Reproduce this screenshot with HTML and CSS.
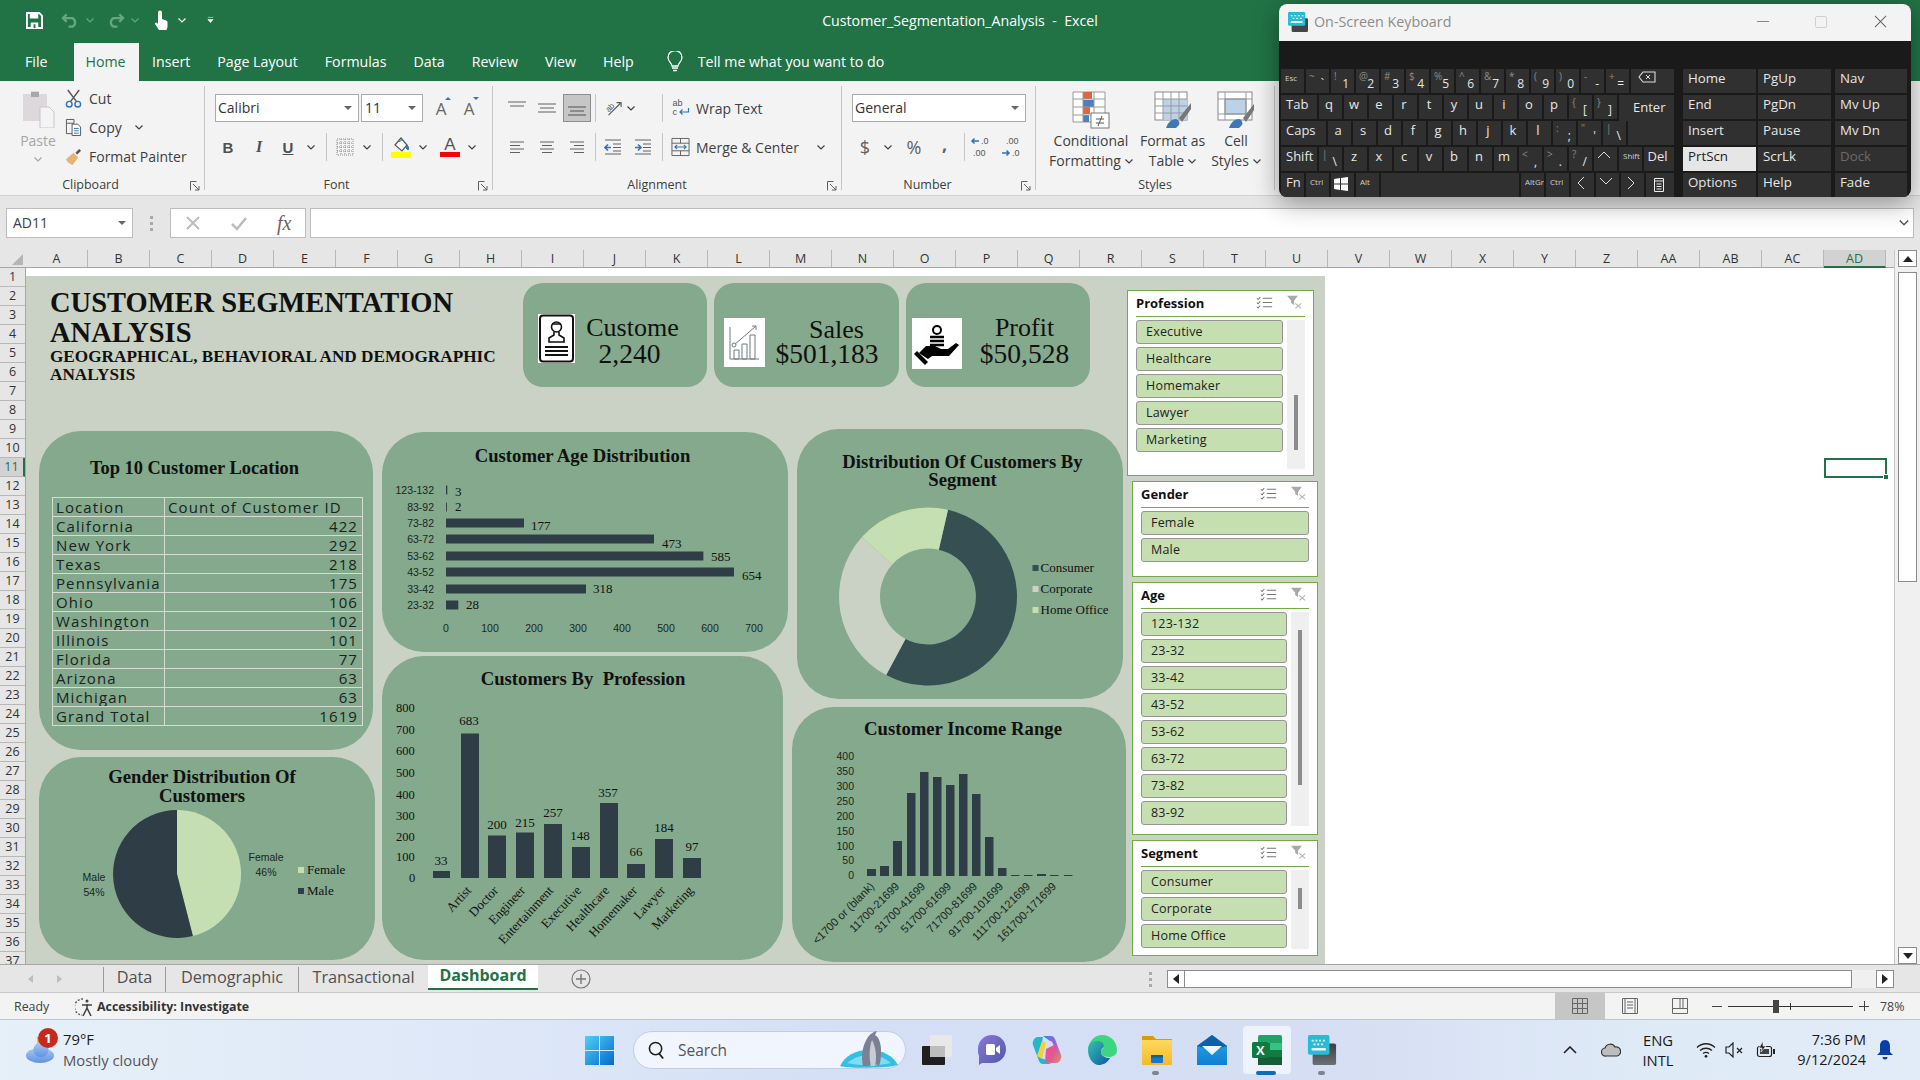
FILE: index.html
```html
<!DOCTYPE html>
<html lang="en">
<head>
  <meta charset="UTF-8">
  <meta name="viewport" content="width=device-width, initial-scale=1.0">
  <title>Customer_Segmentation_Analysis - Excel</title>
  <link rel="stylesheet" href="styles.css">
</head>
<body>
  <!-- shared icon parts -->
  <svg class="sprite" width="0" height="0">
    <defs>
      <linearGradient id="g-start" x1="0" y1="0" x2="1" y2="1"><stop offset="0" stop-color="#4fd0f8"/><stop offset="1" stop-color="#0569c9"/></linearGradient>
      <linearGradient id="g-keys" x1="0" y1="0" x2="0" y2="1"><stop offset="0" stop-color="#3a3f44"/><stop offset="1" stop-color="#6b7074"/></linearGradient>
      <linearGradient id="g-chat" x1="0" y1="0" x2="1" y2="1"><stop offset="0" stop-color="#8a77d8"/><stop offset="1" stop-color="#4f58a8"/></linearGradient>
      <linearGradient id="g-edge" x1="0" y1="0" x2="1" y2="1"><stop offset="0" stop-color="#35c1b0"/><stop offset="1" stop-color="#0c59a4"/></linearGradient>
      <linearGradient id="g-folder" x1="0" y1="0" x2="0" y2="1"><stop offset="0" stop-color="#ffd95c"/><stop offset="1" stop-color="#f5b92a"/></linearGradient>
      <linearGradient id="g-mail" x1="0" y1="0" x2="0" y2="1"><stop offset="0" stop-color="#2aa7e8"/><stop offset="1" stop-color="#0f7fd3"/></linearGradient>
      <linearGradient id="g-cloud" x1="0" y1="0" x2="0" y2="1"><stop offset="0" stop-color="#a9c9f5"/><stop offset="1" stop-color="#5f93df"/></linearGradient>
      <linearGradient id="g-copilot" x1="0" y1="0" x2="1" y2="1"><stop offset="0" stop-color="#2c8fe8"/><stop offset=".5" stop-color="#b05ad0"/><stop offset="1" stop-color="#f4884a"/></linearGradient>
      <symbol id="chev" viewBox="0 0 8 5"><path d="M.5.5 4 4 7.5.5" fill="none" stroke="currentColor" stroke-width="1.2"/></symbol>
      <symbol id="launch" viewBox="0 0 10 10"><path d="M.5 9.5V.5h6M3 3l6 6M9 5v4H5" fill="none" stroke="#606060"/></symbol>
      <symbol id="al-top" viewBox="0 0 20 16"><path d="M1 2h18M3 6h14" stroke="#606060" fill="none"/></symbol>
      <symbol id="al-mid" viewBox="0 0 20 16"><path d="M1 4h18M3 8h14M1 12h18" stroke="#606060" fill="none"/></symbol>
      <symbol id="al-bot" viewBox="0 0 20 16"><path d="M1 7h18M3 11h14M1 15h18" stroke="#505050" fill="none"/></symbol>
      <symbol id="al-left" viewBox="0 0 16 14"><path d="M1 2h14M1 5.5h10M1 9h14M1 12.5h10" stroke="#606060" fill="none"/></symbol>
      <symbol id="al-center" viewBox="0 0 16 14"><path d="M1 2h14M3 5.5h10M1 9h14M3 12.5h10" stroke="#606060" fill="none"/></symbol>
      <symbol id="al-right" viewBox="0 0 16 14"><path d="M1 2h14M5 5.5h10M1 9h14M5 12.5h10" stroke="#606060" fill="none"/></symbol>
      <symbol id="grid-list" viewBox="0 0 20 16"><path d="M1 3l1.5 1.5L5 1.5M1 8l1.5 1.5L5 6.5M1 13l1.5 1.5L5 11.5" fill="none" stroke="#777" stroke-width="1.2"/><path d="M8 3h11M8 8h11M8 13h11" stroke="#777" stroke-width="1.2"/></symbol>
      <symbol id="clear-filter" viewBox="0 0 20 18"><path d="M1 1h13L9.5 7v5L6 9.5V7z" fill="#a9a9a9"/><path d="M11 10l7 6M18 10l-7 6" stroke="#b5b5b5" stroke-width="1.4"/></symbol>
    </defs>
  </svg>

  <div class="window">
    <!-- title bar -->
    <header class="titlebar">
      <div class="qat">
        <svg class="qat-save" viewBox="0 0 18 18"><path d="M1 1h13l3 3v13H1z" fill="none" stroke="#fff" stroke-width="2"/><path d="M4 1h9v6H4zM5 11h8v6H5z" fill="#fff"/><rect x="8" y="13" width="2" height="4" fill="#217346"/></svg>
        <svg class="qat-arrow" viewBox="0 0 20 16"><path d="M6 2 2 6l4 4M2 6h10a5 5 0 0 1 0 9H8" fill="none" stroke="#68a583" stroke-width="2.4"/></svg>
        <svg class="qat-chev dim"><use href="#chev"/></svg>
        <svg class="qat-arrow qat-redo" viewBox="0 0 20 16"><path d="M14 2l4 4-4 4M18 6H8a5 5 0 0 0 0 9h4" fill="none" stroke="#68a583" stroke-width="2.4"/></svg>
        <svg class="qat-chev dim"><use href="#chev"/></svg>
        <svg class="qat-touch" viewBox="0 0 14 20"><path d="M4 2.5a2 2 0 0 1 4 0V9l4 1.5c1 .4 1.5 1 1.5 2V17l-1 3H5l-4-6c-.5-1 .8-2 1.8-1.2L4 14z" fill="#fff"/></svg>
        <svg class="qat-chev qat-chev-touch"><use href="#chev"/></svg>
        <svg class="qat-more" viewBox="0 0 8 8"><path d="M1 1h6M1 3.5h6L4 7z" fill="#fff" stroke="#fff" stroke-width=".6"/></svg>
      </div>
      <div class="doc-title">Customer_Segmentation_Analysis&nbsp; - &nbsp;Excel</div>
    </header>

    <!-- ribbon tabs -->
    <nav class="tabs">
      <span class="tab">File</span>
      <span class="tab active">Home</span>
      <span class="tab">Insert</span>
      <span class="tab">Page Layout</span>
      <span class="tab">Formulas</span>
      <span class="tab">Data</span>
      <span class="tab">Review</span>
      <span class="tab">View</span>
      <span class="tab">Help</span>
      <svg class="bulb" viewBox="0 0 16 22"><path d="M5 15c0-3-4-4-4-8.5a7 7 0 0 1 14 0C15 11 11 12 11 15z" fill="none" stroke="#fff" stroke-width="1.3"/><path d="M5 17h6M6 19.5h4" stroke="#fff" stroke-width="1.5"/></svg>
      <span class="tell">Tell me what you want to do</span>
    </nav>

    <!-- ribbon -->
    <section class="ribbon">
      <div class="group g-clip">
        <div class="clip-body">
          <div class="paste">
            <svg class="paste-icon" viewBox="0 0 34 38"><path d="M2 4h8V1h8v3h8v27H2z" fill="#dcd8dc"/><rect x="10" y="2" width="8" height="5" fill="#aaa6aa"/><path d="M19 17h9l5 5v16H19z" fill="#f5f4f5" stroke="#c9c5c9"/></svg>
            <span class="paste-label">Paste</span>
            <svg class="mini-chev muted"><use href="#chev"/></svg>
          </div>
          <div class="clip-list">
            <div class="clip-item">
              <svg class="clip-icon" viewBox="0 0 18 20"><path d="M3 1l9 12M15 1 6 13" stroke="#555" stroke-width="1.5" fill="none"/><circle cx="4.5" cy="16" r="3" fill="none" stroke="#2e75b6" stroke-width="1.5"/><circle cx="13.5" cy="16" r="3" fill="none" stroke="#2e75b6" stroke-width="1.5"/></svg>
              Cut
            </div>
            <div class="clip-item">
              <svg class="clip-icon" viewBox="0 0 18 20"><path d="M1.5 1.5h8v4h-8zM1.5 5.5v11h6" fill="none" stroke="#555"/><path d="M7.5 6.5h6l3 3v9h-9z" fill="#fff" stroke="#555"/><path d="M9.5 11h5M9.5 13.5h5M9.5 16h5" stroke="#2e75b6"/></svg>
              Copy
              <svg class="mini-chev copy-chev"><use href="#chev"/></svg>
            </div>
            <div class="clip-item">
              <svg class="clip-icon" viewBox="0 0 18 20"><path d="M1 13 9 6l5 5-6 8c-3-1-6-3-7-6z" fill="#e2b574"/><path d="M11 6l4-4 2 2-4 4z" fill="#555"/></svg>
              Format Painter
            </div>
          </div>
        </div>
        <div class="group-label">Clipboard</div>
        <svg class="launcher"><use href="#launch"/></svg>
      </div>

      <div class="group g-font">
        <div class="font-rows">
          <div class="font-top">
            <div class="select select-font">Calibri<i class="caret"></i></div>
            <div class="select select-size">11<i class="caret"></i></div>
            <span class="grow">A<i class="grow-up"></i></span>
            <span class="grow">A<i class="grow-down"></i></span>
          </div>
          <div class="font-tools">
            <b class="fmt">B</b>
            <i class="fmt fmt-i">I</i>
            <u class="fmt fmt-u">U</u>
            <svg class="mini-chev"><use href="#chev"/></svg>
            <span class="sep"></span>
            <svg class="tool-icon" viewBox="0 0 18 18"><path d="M1 1h16v16H1zM1 9h16M9 1v16M1 5h16M1 13h16M5 1v16M13 1v16" fill="none" stroke="#8a8a8a" stroke-dasharray="1 1"/></svg>
            <svg class="mini-chev"><use href="#chev"/></svg>
            <span class="sep"></span>
            <svg class="tool-icon wide" viewBox="0 0 20 22"><path d="M4 9 10 2l6 7-5 6z" fill="#fff" stroke="#555" stroke-width="1.2"/><path d="M8 6l4-3M16 9c2 2 2 4 1 5l-2-2z" fill="#2e75b6" stroke="#2e75b6"/><rect y="16" width="20" height="6" fill="#ffff00"/></svg>
            <svg class="mini-chev"><use href="#chev"/></svg>
            <span class="font-color">A</span>
            <svg class="mini-chev"><use href="#chev"/></svg>
          </div>
        </div>
        <div class="group-label">Font</div>
        <svg class="launcher"><use href="#launch"/></svg>
      </div>

      <div class="group g-align">
        <div class="align-grid">
          <svg class="al"><use href="#al-top"/></svg>
          <svg class="al"><use href="#al-mid"/></svg>
          <span class="al-on"><svg class="al"><use href="#al-bot"/></svg></span>
          <span class="sep"></span>
          <svg class="tool-icon" viewBox="0 0 20 20"><text class="orient-text" x="1" y="11" transform="rotate(-45 8 8)">ab</text><path d="M5 18 18 5M14 4h5v5" fill="none" stroke="#555" stroke-width="1.2"/></svg>
          <svg class="mini-chev chev-left"><use href="#chev"/></svg>
          <span class="sep"></span>
          <svg class="wrap-icon" viewBox="0 0 18 20"><text class="wrap-text" x="1" y="8">ab</text><text class="wrap-text" x="1" y="17">c</text><path d="M17 10v4h-8M11 11.5 8.5 14l2.5 2.5" fill="none" stroke="#2e75b6" stroke-width="1.2"/></svg>
          <span class="align-text">Wrap Text</span>

          <svg class="al al-sm"><use href="#al-left"/></svg>
          <svg class="al al-sm"><use href="#al-center"/></svg>
          <svg class="al al-sm"><use href="#al-right"/></svg>
          <span class="sep"></span>
          <svg class="indent" viewBox="0 0 18 16"><path d="M1 1h16M9 5h8M9 8.5h8M9 12h8M1 15h16" stroke="#606060" fill="none"/><path d="M7 8.5H1M4 5.5l-3 3 3 3" stroke="#2e75b6" stroke-width="1.6" fill="none"/></svg>
          <svg class="indent" viewBox="0 0 18 16"><path d="M1 1h16M9 5h8M9 8.5h8M9 12h8M1 15h16" stroke="#606060" fill="none"/><path d="M1 8.5h6M4 5.5l3 3-3 3" stroke="#2e75b6" stroke-width="1.6" fill="none"/></svg>
          <span class="sep"></span>
          <svg class="wrap-icon" viewBox="0 0 20 20"><path d="M1 1h18v18H1zM1 6h18M1 14h18M10 1v5M10 14v5" fill="none" stroke="#606060"/><path d="M4 10h12M6.5 7.8 4 10l2.5 2.2M13.5 7.8 16 10l-2.5 2.2" fill="none" stroke="#2e75b6" stroke-width="1.1"/></svg>
          <span class="align-text">Merge &amp; Center<svg class="mini-chev merge-chev"><use href="#chev"/></svg></span>
        </div>
        <div class="group-label">Alignment</div>
        <svg class="launcher"><use href="#launch"/></svg>
      </div>

      <div class="group g-number">
        <div class="number-rows">
          <div class="select select-general">General<i class="caret"></i></div>
          <div class="number-tools">
            <span class="num-sym">$</span>
            <svg class="mini-chev"><use href="#chev"/></svg>
            <span class="num-sym pct">%</span>
            <span class="num-sym comma">,</span>
            <span class="sep"></span>
            <svg class="dec-icon" viewBox="0 0 24 24"><path d="M9 6H2M4.5 3.5 2 6l2.5 2.5" fill="none" stroke="#2e75b6" stroke-width="1.5"/><text class="dec-text" x="11" y="9">.0</text><text class="dec-text" x="3" y="21">.00</text></svg>
            <svg class="dec-icon" viewBox="0 0 24 24"><text class="dec-text" x="6" y="9">.00</text><path d="M2 18h7M6.5 15.5 9 18l-2.5 2.5" fill="none" stroke="#2e75b6" stroke-width="1.5"/><text class="dec-text" x="12" y="21">.0</text></svg>
          </div>
        </div>
        <div class="group-label">Number</div>
        <svg class="launcher"><use href="#launch"/></svg>
      </div>

      <div class="group g-styles">
        <div class="style-cols">
          <div class="style-col">
            <svg class="style-icon" viewBox="0 0 38 38"><path d="M1 1h32v30H1z" fill="#fff" stroke="#9a9a9a"/><rect x="11" y="1" width="9" height="7" fill="#e0653a"/><rect x="11" y="9" width="11" height="7" fill="#4a81bd"/><rect x="11" y="16" width="7" height="7" fill="#e0653a"/><rect x="11" y="24" width="6" height="7" fill="#4a81bd"/><path d="M1 8h32M1 16h32M1 24h32M11 1v30M22 1v30" stroke="#9a9a9a" fill="none"/><rect x="19" y="22" width="18" height="15" fill="#fff" stroke="#777"/><path d="M24 28h8M24 32h8M30 25l-4 10" stroke="#555"/></svg>
            <span>Conditional</span>
            <span>Formatting<svg class="mini-chev style-chev"><use href="#chev"/></svg></span>
          </div>
          <div class="style-col">
            <svg class="style-icon" viewBox="0 0 38 38"><rect x="1" y="1" width="32" height="28" fill="#fff" stroke="#888"/><rect x="9" y="8" width="24" height="21" fill="#bcd2e8"/><path d="M1 8h32M1 15h32M1 22h32M9 1v28M17 1v28M25 1v28" stroke="#9a9a9a" fill="none"/><path d="M25 27 37 12v6L28 31z" fill="#777"/><path d="M12 37c2-6 6-9 10-9 3 1 4 4 3 6l-3 3z" fill="#3d77b5"/></svg>
            <span>Format as</span>
            <span>Table<svg class="mini-chev style-chev"><use href="#chev"/></svg></span>
          </div>
          <div class="style-col">
            <svg class="style-icon" viewBox="0 0 38 38"><rect x="1" y="1" width="34" height="28" fill="#fff" stroke="#888"/><rect x="8" y="8" width="21" height="15" fill="#bcd2e8" stroke="#888"/><path d="M8 1v28M29 1v28M1 8h34M1 23h34" stroke="#9a9a9a" fill="none"/><path d="M26 27 37 13v6L29 31z" fill="#777"/><path d="M12 37c2-6 6-9 10-9 3 1 4 4 3 6l-3 3z" fill="#3d77b5"/></svg>
            <span>Cell</span>
            <span>Styles<svg class="mini-chev style-chev"><use href="#chev"/></svg></span>
          </div>
        </div>
        <div class="group-label">Styles</div>
      </div>
    </section>

    <!-- formula bar -->
    <section class="formula">
      <div class="name-box">AD11<i class="caret"></i></div>
      <span class="grip"></span>
      <div class="fx-box">
        <svg class="fx-x" viewBox="0 0 16 16"><path d="M2 2l12 12M14 2 2 14" stroke="#bdbdbd" stroke-width="2"/></svg>
        <svg class="fx-x" viewBox="0 0 16 16"><path d="M1 9l5 5L15 3" fill="none" stroke="#bdbdbd" stroke-width="2.5"/></svg>
        <span class="fx">fx</span>
      </div>
      <div class="formula-input"><svg class="formula-chev"><use href="#chev"/></svg></div>
    </section>

    <!-- worksheet -->
    <section class="sheet">
      <div class="sheet-main">
        <div class="col-heads">
          <div class="corner"><i></i></div>
          <span>A</span><span>B</span><span>C</span><span>D</span><span>E</span><span>F</span><span>G</span><span>H</span><span>I</span><span>J</span>
          <span>K</span><span>L</span><span>M</span><span>N</span><span>O</span><span>P</span><span>Q</span><span>R</span><span>S</span><span>T</span>
          <span>U</span><span>V</span><span>W</span><span>X</span><span>Y</span><span>Z</span><span>AA</span><span>AB</span><span>AC</span><span class="on">AD</span>
        </div>
        <div class="sheet-body">
          <div class="row-heads">
            <span>1</span><span>2</span><span>3</span><span>4</span><span>5</span><span>6</span><span>7</span><span>8</span><span>9</span><span>10</span>
            <span class="on">11</span><span>12</span><span>13</span><span>14</span><span>15</span><span>16</span><span>17</span><span>18</span><span>19</span><span>20</span>
            <span>21</span><span>22</span><span>23</span><span>24</span><span>25</span><span>26</span><span>27</span><span>28</span><span>29</span><span>30</span>
            <span>31</span><span>32</span><span>33</span><span>34</span><span>35</span><span>36</span><span>37</span>
          </div>

          <div class="canvas">
            <div class="backdrop"></div>
            <div class="active-cell"><i></i></div>

            <div class="heading">
              <h1>CUSTOMER SEGMENTATION ANALYSIS</h1>
              <h2>GEOGRAPHICAL, BEHAVIORAL AND DEMOGRAPHIC ANALYSIS</h2>
            </div>

            <!-- KPI cards -->
            <div class="kpi kpi-customers">
              <svg class="kpi-icon icon-id" viewBox="0 0 37 49"><rect width="37" height="49" fill="#fff"/><rect x="2" y="1.5" width="33" height="46" rx="3" fill="none" stroke="#111" stroke-width="2"/><circle cx="18.5" cy="13" r="5" fill="none" stroke="#111" stroke-width="1.6"/><path d="M14 10h9M16 18v3l-5 3v4h15v-4l-5-3v-3" fill="none" stroke="#111" stroke-width="1.6"/><path d="M7 33h23M7 37h23M7 41h23" stroke="#111" stroke-width="2"/></svg>
              <div class="kpi-text kpi-text-customers"><span>Custome</span><span class="kpi-num num-customers">2,240</span></div>
            </div>
            <div class="kpi kpi-sales">
              <svg class="kpi-icon icon-sales" viewBox="0 0 41 49"><rect width="41" height="49" fill="#fff"/><path d="M6 9v32h29" fill="none" stroke="#6c7a80"/><path d="M10 27 32 8M28 8h4v4" fill="none" stroke="#6c7a80"/><circle cx="10" cy="27" r="2" fill="#fff" stroke="#6c7a80"/><path d="M10 32h5v9h-5zM18 26h5v15h-5zM26 17h5v24h-5z" fill="none" stroke="#6c7a80"/></svg>
              <div class="kpi-text kpi-text-sales"><span class="label-sales">Sales</span><span class="kpi-num">$501,183</span></div>
            </div>
            <div class="kpi kpi-profit">
              <svg class="kpi-icon icon-profit" viewBox="0 0 50 51"><rect width="50" height="51" fill="#fff"/><circle cx="25" cy="12" r="4" fill="none" stroke="#000" stroke-width="2"/><path d="M18 19h14M18 23h14M18 27h14" stroke="#000" stroke-width="2.6"/><path d="M7 35l7-7h9l6 3h7l8-6 3 2-10 11H20l-4 3z" fill="#000"/><path d="M5 33l11 11-3 3L2 36z" fill="#000"/></svg>
              <div class="kpi-text kpi-text-profit"><span>Profit</span><span class="kpi-num">$50,528</span></div>
            </div>

            <!-- Top 10 table -->
            <div class="panel panel-top10">
              <div class="top10-title">Top 10 Customer Location</div>
              <table class="loc-table">
                <tr><td>Location</td><td>Count of Customer ID</td></tr>
                <tr><td>California</td><td class="num">422</td></tr>
                <tr><td>New York</td><td class="num">292</td></tr>
                <tr><td>Texas</td><td class="num">218</td></tr>
                <tr><td>Pennsylvania</td><td class="num">175</td></tr>
                <tr><td>Ohio</td><td class="num">106</td></tr>
                <tr><td>Washington</td><td class="num">102</td></tr>
                <tr><td>Illinois</td><td class="num">101</td></tr>
                <tr><td>Florida</td><td class="num">77</td></tr>
                <tr><td>Arizona</td><td class="num">63</td></tr>
                <tr><td>Michigan</td><td class="num">63</td></tr>
                <tr><td>Grand Total</td><td class="num">1619</td></tr>
              </table>
            </div>

            <!-- Gender pie -->
            <div class="panel panel-gender">
              <svg class="chart" viewBox="39 757 336 203">
                <text class="chart-title" x="202" y="783">Gender Distribution Of</text>
                <text class="chart-title" x="202" y="802">Customers</text>
                <path class="c-light" d="M177 874V810A64 64 0 0 1 192.9 936Z"/>
                <path class="c-dark" d="M177 874 192.9 936A64 64 0 1 1 177 810Z"/>
                <text class="axis mid" x="266" y="861">Female</text>
                <text class="axis mid" x="266" y="876">46%</text>
                <text class="axis mid" x="94" y="881">Male</text>
                <text class="axis mid" x="94" y="896">54%</text>
                <rect class="c-light" x="298" y="867" width="6" height="6"/>
                <text class="legend" x="307" y="874">Female</text>
                <rect class="c-dark" x="298" y="888" width="6" height="6"/>
                <text class="legend" x="307" y="895">Male</text>
              </svg>
            </div>

            <!-- Age bars -->
            <div class="panel panel-age">
              <svg class="chart" viewBox="382 432 406 220">
                <text class="chart-title" x="582.5" y="462">Customer Age Distribution</text>
                <g class="axis end">
                  <text x="434" y="494">123-132</text><text x="434" y="511">83-92</text>
                  <text x="434" y="527">73-82</text><text x="434" y="543">63-72</text>
                  <text x="434" y="560">53-62</text><text x="434" y="576">43-52</text>
                  <text x="434" y="593">33-42</text><text x="434" y="609">23-32</text>
                </g>
                <g class="c-dark">
                  <rect x="446" y="485.5" width="1.3" height="9"/><rect x="446" y="502.5" width=".9" height="9"/>
                  <rect x="446" y="518.5" width="78" height="9"/><rect x="446" y="534.5" width="208" height="9"/>
                  <rect x="446" y="551.5" width="257.4" height="9"/><rect x="446" y="567.5" width="288" height="9"/>
                  <rect x="446" y="584.5" width="140" height="9"/><rect x="446" y="600.5" width="12.3" height="9"/>
                </g>
                <g class="value">
                  <text x="455" y="496">3</text><text x="455" y="511">2</text>
                  <text x="531" y="530">177</text><text x="662" y="548">473</text>
                  <text x="711" y="561">585</text><text x="742" y="580">654</text>
                  <text x="593" y="593">318</text><text x="466" y="609">28</text>
                </g>
                <g class="axis mid">
                  <text x="446" y="632">0</text><text x="490" y="632">100</text><text x="534" y="632">200</text>
                  <text x="578" y="632">300</text><text x="622" y="632">400</text><text x="666" y="632">500</text>
                  <text x="710" y="632">600</text><text x="754" y="632">700</text>
                </g>
              </svg>
            </div>

            <!-- Profession columns -->
            <div class="panel panel-profession">
              <svg class="chart" viewBox="382 656 401 304">
                <text class="chart-title" x="583" y="685" xml:space="preserve">Customers By  Profession</text>
                <g class="value-axis">
                  <text x="396" y="712">800</text><text x="396" y="734">700</text><text x="396" y="755">600</text>
                  <text x="396" y="777">500</text><text x="396" y="799">400</text><text x="396" y="820">300</text>
                  <text x="396" y="841">200</text><text x="396" y="861">100</text><text x="409" y="882">0</text>
                </g>
                <g class="c-dark">
                  <rect x="433" y="871" width="17" height="7"/><rect x="461" y="733.5" width="18" height="144.5"/>
                  <rect x="488" y="835.5" width="18" height="42.5"/><rect x="516" y="832.5" width="18" height="45.5"/>
                  <rect x="544" y="824" width="18" height="54"/><rect x="572" y="847" width="18" height="31"/>
                  <rect x="600" y="803" width="18" height="75"/><rect x="627" y="864" width="18" height="14"/>
                  <rect x="655" y="839" width="18" height="39"/><rect x="683" y="858" width="18" height="20"/>
                </g>
                <g class="value mid-val">
                  <text x="441" y="865">33</text><text x="469" y="725">683</text><text x="497" y="829">200</text>
                  <text x="525" y="827">215</text><text x="553" y="817">257</text><text x="580" y="840">148</text>
                  <text x="608" y="797">357</text><text x="636" y="856">66</text><text x="664" y="832">184</text>
                  <text x="692" y="851">97</text>
                </g>
                <g class="cat-serif">
                  <text x="472" y="891" transform="rotate(-47 472 891)">Artist</text>
                  <text x="499" y="891" transform="rotate(-47 499 891)">Doctor</text>
                  <text x="526" y="891" transform="rotate(-47 526 891)">Engineer</text>
                  <text x="554" y="891" transform="rotate(-47 554 891)">Entertainment</text>
                  <text x="582" y="891" transform="rotate(-47 582 891)">Executive</text>
                  <text x="610" y="891" transform="rotate(-47 610 891)">Healthcare</text>
                  <text x="638" y="891" transform="rotate(-47 638 891)">Homemaker</text>
                  <text x="666" y="891" transform="rotate(-47 666 891)">Lawyer</text>
                  <text x="694" y="891" transform="rotate(-47 694 891)">Marketing</text>
                </g>
              </svg>
            </div>

            <!-- Segment donut -->
            <div class="panel panel-segment">
              <svg class="chart" viewBox="796.5 429 326.5 270">
                <text class="chart-title" x="962" y="468">Distribution Of Customers By</text>
                <text class="chart-title" x="962" y="486">Segment</text>
                <path class="c-slate" d="M947.5 509.8A89 89 0 1 1 885.7 675.1L905 638.9A48 48 0 1 0 938.3 549.7Z"/>
                <path class="c-pale" d="M885.7 675.1A89 89 0 0 1 861.4 537L891.8 564.4A48 48 0 0 0 905 638.9Z"/>
                <path class="c-light" d="M861.4 537A89 89 0 0 1 947.5 509.8L938.3 549.7A48 48 0 0 0 891.8 564.4Z"/>
                <rect class="c-slate" x="1032" y="565" width="6" height="6"/>
                <text class="legend" x="1040" y="572">Consumer</text>
                <rect class="c-pale" x="1032" y="586" width="6" height="6"/>
                <text class="legend" x="1040" y="593">Corporate</text>
                <rect class="c-light" x="1032" y="607" width="6" height="6"/>
                <text class="legend" x="1040" y="614">Home Office</text>
              </svg>
            </div>

            <!-- Income histogram -->
            <div class="panel panel-income">
              <svg class="chart" viewBox="792 707 334 255">
                <text class="chart-title" x="963" y="735">Customer Income Range</text>
                <g class="axis end">
                  <text x="854" y="760">400</text><text x="854" y="775">350</text><text x="854" y="790">300</text>
                  <text x="854" y="805">250</text><text x="854" y="820">200</text><text x="854" y="835">150</text>
                  <text x="854" y="850">100</text><text x="854" y="864">50</text><text x="854" y="879">0</text>
                </g>
                <g class="c-dark">
                  <rect x="867" y="869" width="9" height="7"/><rect x="880" y="866" width="9" height="10"/>
                  <rect x="893" y="841" width="9" height="35"/><rect x="907" y="793" width="8.5" height="83"/>
                  <rect x="920" y="772" width="8.5" height="104"/><rect x="933" y="777" width="8.5" height="99"/>
                  <rect x="946" y="785" width="8.5" height="91"/><rect x="959" y="774" width="8.5" height="102"/>
                  <rect x="972" y="794" width="8.5" height="82"/><rect x="985" y="837" width="8.5" height="39"/>
                  <rect x="998" y="868" width="8.5" height="8"/><rect x="1011" y="875" width="8.5" height="1"/>
                  <rect x="1024" y="875" width="8.5" height="1"/><rect x="1037" y="874" width="9" height="2"/>
                  <rect x="1050" y="875" width="8.5" height="1"/><rect x="1064" y="875" width="8.5" height="1"/>
                </g>
                <g class="cat-sans">
                  <text x="875" y="887" transform="rotate(-45 875 887)">&lt;1700 or (blank)</text>
                  <text x="900" y="887" transform="rotate(-45 900 887)">11700-21699</text>
                  <text x="926" y="887" transform="rotate(-45 926 887)">31700-41699</text>
                  <text x="952" y="887" transform="rotate(-45 952 887)">51700-61699</text>
                  <text x="978" y="887" transform="rotate(-45 978 887)">71700-81699</text>
                  <text x="1004" y="887" transform="rotate(-45 1004 887)">91700-101699</text>
                  <text x="1031" y="887" transform="rotate(-45 1031 887)">111700-121699</text>
                  <text x="1057" y="887" transform="rotate(-45 1057 887)">161700-171699</text>
                </g>
              </svg>
            </div>

            <!-- Slicers -->
            <div class="slicer slicer-profession">
              <div class="slicer-head"><b>Profession</b><svg class="sl-icon"><use href="#grid-list"/></svg><svg class="sl-icon"><use href="#clear-filter"/></svg></div>
              <div class="slicer-body">
                <div class="slicer-items">
                  <span>Executive</span><span>Healthcare</span><span>Homemaker</span><span>Lawyer</span><span>Marketing</span>
                </div>
                <div class="track"><i></i></div>
              </div>
            </div>
            <div class="slicer slicer-gender">
              <div class="slicer-head"><b>Gender</b><svg class="sl-icon"><use href="#grid-list"/></svg><svg class="sl-icon"><use href="#clear-filter"/></svg></div>
              <div class="slicer-body">
                <div class="slicer-items"><span>Female</span><span>Male</span></div>
              </div>
            </div>
            <div class="slicer slicer-age">
              <div class="slicer-head"><b>Age</b><svg class="sl-icon"><use href="#grid-list"/></svg><svg class="sl-icon"><use href="#clear-filter"/></svg></div>
              <div class="slicer-body">
                <div class="slicer-items">
                  <span>123-132</span><span>23-32</span><span>33-42</span><span>43-52</span><span>53-62</span><span>63-72</span><span>73-82</span><span>83-92</span>
                </div>
                <div class="track"><i></i></div>
              </div>
            </div>
            <div class="slicer slicer-segment">
              <div class="slicer-head"><b>Segment</b><svg class="sl-icon"><use href="#grid-list"/></svg><svg class="sl-icon"><use href="#clear-filter"/></svg></div>
              <div class="slicer-body">
                <div class="slicer-items"><span>Consumer</span><span>Corporate</span><span>Home Office</span></div>
                <div class="track"><i></i></div>
              </div>
            </div>
          </div>
        </div>
      </div>
      <div class="vscroll">
        <div class="sb-btn"><i class="tri-up"></i></div>
        <div class="sb-thumb"></div>
        <div class="sb-btn sb-bottom"><i class="tri-down"></i></div>
      </div>
    </section>

    <!-- sheet tabs -->
    <section class="sheet-tabs">
      <div class="tab-nav"><i class="nav-left"></i><i class="nav-right"></i></div>
      <span class="sheet-tab tab-data">Data</span>
      <span class="sheet-tab tab-demo">Demographic</span>
      <span class="sheet-tab tab-trans">Transactional</span>
      <span class="sheet-tab tab-dash">Dashboard</span>
      <svg class="add-sheet" viewBox="0 0 20 20"><circle cx="10" cy="10" r="9" fill="none" stroke="#777" stroke-width="1.2"/><path d="M10 5v10M5 10h10" stroke="#777" stroke-width="1.4"/></svg>
      <span class="grip tab-grip"></span>
      <div class="hscroll">
        <div class="hs-btn"><i class="tri-left"></i></div>
        <div class="hs-track"></div>
        <div class="hs-btn hs-end"><i class="tri-right"></i></div>
      </div>
    </section>

    <!-- status bar -->
    <footer class="status">
      <span class="ready">Ready</span>
      <svg class="acc-icon" viewBox="0 0 20 20"><path d="M8 2a8 8 0 0 0-1 16" fill="none" stroke="#555" stroke-dasharray="2 1.5" stroke-width="1.4"/><circle cx="12" cy="4" r="1.5" fill="#444"/><path d="M7 8h10M12 7v5M12 11l-4 8M12 11l4 8" stroke="#444" stroke-width="1.6" fill="none"/></svg>
      <b class="acc-text">Accessibility: Investigate</b>
      <div class="views">
        <span class="view on"><svg viewBox="0 0 16 16"><path d="M.5.5h15v15H.5zM.5 5.5h15M.5 10.5h15M5.5.5v15M10.5.5v15" fill="none" stroke="#666"/></svg></span>
        <span class="view"><svg viewBox="0 0 16 16"><path d="M.5.5h15v15H.5z" fill="none" stroke="#666"/><path d="M3 .5v15M13 .5v15M5 4h6M5 7h6M5 10h6" fill="none" stroke="#666"/></svg></span>
        <span class="view"><svg viewBox="0 0 16 16"><path d="M.5.5h15v15H.5zM.5 10.5h15M8 .5v10M11 .5v10" fill="none" stroke="#666"/></svg></span>
      </div>
      <div class="zoom-ctl">
        <span class="zoom-minus"></span>
        <div class="zoom-track"><i class="zoom-tick"></i><i class="zoom-thumb"></i></div>
        <span class="zoom-plus"></span>
        <span class="zoom-pct">78%</span>
      </div>
    </footer>

    <!-- windows taskbar -->
    <footer class="taskbar">
      <div class="weather">
        <svg class="weather-icon" viewBox="0 0 32 36"><path d="M3 22c5 1 10-2 10-10 0-2 0-4-1-5 8 1 12 7 10 13z" fill="#f2b233"/><ellipse cx="16" cy="27" rx="15" ry="8" fill="url(#g-cloud)"/><circle cx="17" cy="21" r="8" fill="url(#g-cloud)"/></svg>
        <span class="weather-badge">1</span>
        <div class="weather-text"><span class="temp">79°F</span><span class="sky">Mostly cloudy</span></div>
      </div>
      <div class="task-center">
        <svg class="win-start" viewBox="0 0 29 29"><path d="M0 0h14v14H0zM15 0h14v14H15zM0 15h14v14H0zM15 15h14v14H15z" fill="url(#g-start)"/></svg>
        <div class="search-pill">
          <svg class="search-icon" viewBox="0 0 18 20"><circle cx="8" cy="8.5" r="6.5" fill="none" stroke="#222" stroke-width="1.7"/><path d="M12 14l4 5" stroke="#222" stroke-width="2"/></svg>
          <span>Search</span>
          <svg class="dolphin" viewBox="0 0 60 38"><path d="M1 36C6 26 16 20 30 20s24 6 29 15c-8 3-50 4-58 1z" fill="#35bfe2"/><path d="M8 33c8-6 15-8 22-8s15 2 22 8c-14 3-30 3-44 0z" fill="#7fdcf2"/><path d="M24 36c-2-9-1-20 5-29 2-3 7-6 9-6l-2 4c4 2 6 9 6 15 0 6 0 11-2 16l-3-2-2 3-2-4-3 3z" fill="#7d7f93"/><path d="M32 36c-2-8-2-18 1-26 4 7 5 18 3 26z" fill="#c9ccd6"/></svg>
        </div>
        <span class="task-app app-task">
          <svg viewBox="0 0 30 30"><rect x="8" y="0" width="22" height="22" rx="1" fill="#e8e8e8"/><rect x="0" y="11" width="23" height="19" rx="1" fill="#1f1f1f"/><rect x="8" y="11" width="15" height="11" fill="#bdbdbd"/></svg>
        </span>
        <span class="task-app app-chat">
          <svg viewBox="0 0 30 30"><path d="M15 0c8 0 14 6 14 14s-6 14-14 14H5l-3 2v-9C1 19 1 16 1 14 1 6 7 0 15 0z" fill="url(#g-chat)"/><rect x="9" y="9" width="9" height="11" rx="1.5" fill="#fff"/><path d="M19 13l4-3v9l-4-3z" fill="#fff"/></svg>
        </span>
        <span class="task-app app-copilot">
          <svg viewBox="0 0 30 30"><path d="M11 1h8c2 0 3 1 4 3l6 16c1 3-1 8-5 8h-5L22 11C21 8 20 6 18 6z" fill="url(#g-copilot)"/><path d="M19 29h-8c-2 0-3-1-4-3L1 10c-1-3 1-8 5-8h5L8 19c1 3 2 5 4 5z" fill="#27b6c9"/><path d="M10 6c4 0 4 3 3 6l-3 12-5-3z" fill="#f2d13d"/><path d="M14 14l8-4c2 5 1 12-3 18l-6-1z" fill="#e4578f"/></svg>
        </span>
        <span class="task-app app-edge">
          <svg viewBox="0 0 30 30"><path d="M15 0c9 0 15 7 15 15 0 5-4 7-8 7-6 0-8-3-8-5 0-3 3-3 3-6 0-2-3-4-6-4-6 0-9 4-10 7C2 6 8 0 15 0z" fill="#3bd67f"/><path d="M1 15C1 8 6 6 10 6c4 0 7 2 7 5 0 2-3 2-3 6 0 4 5 6 9 6-3 5-7 7-11 7C6 30 1 23 1 15z" fill="url(#g-edge)"/></svg>
        </span>
        <span class="task-app app-files">
          <svg viewBox="0 0 30 30"><path d="M0 1h11l3 3h16v4H0z" fill="#d99a10"/><rect y="5" width="30" height="25" rx="1" fill="url(#g-folder)"/><rect x="9" y="20" width="12" height="8" rx="1" fill="#1678c8"/><rect x="9" y="20" width="12" height="2.5" fill="#0f5ea3"/></svg>
        </span>
        <span class="task-app app-mail">
          <svg viewBox="0 0 30 30"><path d="M15 0 30 11v19H0V11z" fill="url(#g-mail)"/><path d="M15 0 30 11 15 15 0 11z" fill="#0c5fa8"/><path d="M5 11h20L15 20z" fill="#eef6fb"/></svg>
        </span>
        <span class="task-app app-excel">
          <svg viewBox="0 0 30 30"><rect x="6" y="0" width="24" height="30" rx="2" fill="#21a366"/><rect x="6" y="8" width="12" height="14" fill="#107c41"/><rect x="18" y="8" width="12" height="7" fill="#33c481"/><rect x="18" y="15" width="12" height="7" fill="#107c41"/><rect x="6" y="22" width="24" height="8" fill="#185c37"/><rect x="0" y="7" width="16" height="16" rx="1.5" fill="#0e7a3f"/><text class="excel-x" x="4" y="20">X</text></svg>
        </span>
        <span class="task-app app-osk">
          <svg viewBox="0 0 30 32"><rect x="5" y="9" width="25" height="23" rx="2" fill="url(#g-keys)"/><rect x="0" y="0" width="23" height="21" rx="2" fill="#25bcd6"/><path d="M4 6h2M8 6h2M12 6h2M16 6h2M6 10h2M10 10h2M14 10h2" stroke="#fff" stroke-width="1.8"/><rect x="4" y="14" width="15" height="2.5" fill="#fff"/></svg>
        </span>
        <i class="task-dot dot-files"></i>
        <i class="task-bar"></i>
        <i class="task-dot dot-osk"></i>
      </div>
      <div class="tray">
        <svg class="tray-chev" viewBox="0 0 14 8"><path d="M1 7 7 1l6 6" fill="none" stroke="#222" stroke-width="1.6"/></svg>
        <svg class="tray-cloud" viewBox="0 0 20 14"><path d="M5 13a4 4 0 0 1-1-8 5.5 5.5 0 0 1 10-1 4.5 4.5 0 0 1 2 9z" fill="#bdbdbd" stroke="#333" stroke-width="1.2"/></svg>
        <div class="lang"><span>ENG</span><span>INTL</span></div>
        <svg class="tray-wifi" viewBox="0 0 20 16"><path d="M1 5.5c5-5 13-5 18 0M4 8.5c3.5-3 8.5-3 12 0M7 11.5c2-1.5 4-1.5 6 0" fill="none" stroke="#222" stroke-width="1.3"/><circle cx="10" cy="14.3" r="1.4" fill="#222"/></svg>
        <svg class="tray-vol" viewBox="0 0 20 16"><path d="M1 5h3l4-4v14l-4-4H1z" fill="none" stroke="#222" stroke-width="1.2"/><path d="M12 6l5 5M17 6l-5 5" stroke="#222" stroke-width="1.2"/></svg>
        <svg class="tray-bat" viewBox="0 0 20 18"><rect x="1.5" y="5.5" width="14" height="10" rx="2" fill="none" stroke="#222" stroke-width="1.2"/><rect x="4" y="8" width="9" height="5" fill="#444"/><rect x="17" y="8" width="2" height="5" fill="#222"/><path d="M7 0 3 7h3l-1 4 5-6H7z" fill="#222" stroke="#e4eef8" stroke-width=".7"/></svg>
        <div class="clock"><span>7:36 PM</span><span>9/12/2024</span></div>
        <svg class="tray-bell" viewBox="0 0 16 20"><path d="M8 0c3.5 0 5 3 5 6v6l3 3H0l3-3V6c0-3 1.5-6 5-6z" fill="#0a3fa8"/><path d="M5.5 17h5a2.5 2.5 0 0 1-5 0z" fill="#0a3fa8"/></svg>
      </div>
    </footer>

    <!-- on-screen keyboard window -->
    <aside class="osk">
      <div class="osk-title">
        <svg class="osk-logo" viewBox="0 0 22 22"><rect x="4" y="7" width="18" height="15" rx="1.5" fill="#454545"/><rect x="0" y="0" width="19" height="15" rx="1.5" fill="#25bcd6"/><path d="M3 4h2M7 4h2M11 4h2M15 4h2M5 7h2M9 7h2M13 7h2" stroke="#fff" stroke-width="1.3"/><rect x="3" y="10" width="13" height="2" fill="#fff"/></svg>
        <span class="osk-name">On-Screen Keyboard</span>
        <div class="osk-btns">
          <i class="osk-min"></i>
          <i class="osk-max"></i>
          <svg class="osk-close" viewBox="0 0 14 14"><path d="M1 1l12 12M13 1 1 13" stroke="#666" stroke-width="1.1"/></svg>
        </div>
      </div>
      <div class="osk-gap"></div>
      <div class="osk-keys">
        <div class="osk-main">
          <div class="key-row">
            <span class="key tiny">Esc</span><span class="key dual"><s>~</s><b>`</b></span><span class="key dual"><s>!</s><b>1</b></span><span class="key dual"><s>@</s><b>2</b></span><span class="key dual"><s>#</s><b>3</b></span><span class="key dual"><s>$</s><b>4</b></span><span class="key dual"><s>%</s><b>5</b></span><span class="key dual"><s>^</s><b>6</b></span><span class="key dual"><s>&amp;</s><b>7</b></span><span class="key dual"><s>*</s><b>8</b></span><span class="key dual"><s>(</s><b>9</b></span><span class="key dual"><s>)</s><b>0</b></span><span class="key dual"><s>-</s><b>-</b></span><span class="key dual"><s>+</s><b>=</b></span>
            <span class="key k-back"><svg class="back-icon" viewBox="0 0 18 12"><path d="M5 1h12v10H5L1 6z" fill="none" stroke="#ddd" stroke-width="1.1"/><path d="M8 4l4 4M12 4 8 8" stroke="#ddd"/></svg></span>
          </div>
          <div class="key-row">
            <span class="key k-tab">Tab</span><span class="key">q</span><span class="key">w</span><span class="key">e</span><span class="key">r</span><span class="key">t</span><span class="key">y</span><span class="key">u</span><span class="key">i</span><span class="key">o</span><span class="key">p</span><span class="key dual"><s>{</s><b>[</b></span><span class="key dual"><s>}</s><b>]</b></span>
            <span class="key k-enter">Enter</span>
          </div>
          <div class="key-row">
            <span class="key k-caps">Caps</span><span class="key">a</span><span class="key">s</span><span class="key">d</span><span class="key">f</span><span class="key">g</span><span class="key">h</span><span class="key">j</span><span class="key">k</span><span class="key">l</span><span class="key dual"><s>:</s><b>;</b></span><span class="key dual"><s>"</s><b>'</b></span><span class="key dual"><s>|</s><b>\</b></span>
            <span class="key k-enter-low"></span>
          </div>
          <div class="key-row">
            <span class="key k-tab">Shift</span><span class="key dual"><s>|</s><b>\</b></span><span class="key">z</span><span class="key">x</span><span class="key">c</span><span class="key">v</span><span class="key">b</span><span class="key">n</span><span class="key">m</span><span class="key dual"><s>&lt;</s><b>,</b></span><span class="key dual"><s>&gt;</s><b>.</b></span><span class="key dual"><s>?</s><b>/</b></span><span class="key"><svg class="arrow-icon" viewBox="0 0 14 8"><path d="M1 7 7 1l6 6" fill="none" stroke="#ddd"/></svg></span><span class="key tiny">Shift</span>
            <span class="key k-del">Del</span>
          </div>
          <div class="key-row">
            <span class="key k-fn">Fn</span><span class="key tiny">Ctrl</span><span class="key"><svg class="win-icon" viewBox="0 0 14 14"><path d="M0 2l6-1v5.5H0zM7 1l7-1v6.5H7zM0 7.5h6V13l-6-1zM7 7.5h7V14l-7-1z" fill="#fff"/></svg></span><span class="key tiny">Alt</span>
            <span class="key k-space"></span>
            <span class="key tiny">AltGr</span><span class="key tiny">Ctrl</span><span class="key"><svg class="arrow-side" viewBox="0 0 8 14"><path d="M7 1 1 7l6 6" fill="none" stroke="#ddd"/></svg></span><span class="key"><svg class="arrow-icon" viewBox="0 0 14 8"><path d="M1 1l6 6 6-6" fill="none" stroke="#ddd"/></svg></span><span class="key"><svg class="arrow-side" viewBox="0 0 8 14"><path d="M1 1l6 6-6 6" fill="none" stroke="#ddd"/></svg></span>
            <span class="key k-menu"><svg class="menu-icon" viewBox="0 0 10 14"><path d="M.5.5h9v13h-9zM.5 3h9M2.5 6h5M2.5 8.5h5M2.5 11h5" fill="none" stroke="#eee"/></svg></span>
          </div>
        </div>
        <div class="osk-side">
          <span class="key side">Home</span><span class="key side">PgUp</span><span class="key side side-3">Nav</span>
          <span class="key side">End</span><span class="key side">PgDn</span><span class="key side side-3">Mv Up</span>
          <span class="key side">Insert</span><span class="key side">Pause</span><span class="key side side-3">Mv Dn</span>
          <span class="key side lit">PrtScn</span><span class="key side">ScrLk</span><span class="key side side-3 off">Dock</span>
          <span class="key side">Options</span><span class="key side">Help</span><span class="key side side-3">Fade</span>
        </div>
      </div>
    </aside>
  </div>
</body>
</html>
```

FILE: styles.css
```css
* {
  box-sizing: border-box;
}

html, body {
  margin: 0;
  width: 1920px;
  height: 1080px;
  overflow: hidden;
}

body {
  font-family: "Open Sans", "Noto Sans", sans-serif;
  font-size: 14px;
  color: #404040;
}

.sprite {
  position: absolute;
}

.window {
  position: relative;
  width: 1920px;
  height: 1080px;
  display: flex;
  flex-direction: column;
}

/* title bar */
.titlebar {
  height: 40px;
  background: #217346;
  display: flex;
  align-items: center;
  position: relative;
  color: #fff;
}

.qat {
  display: flex;
  align-items: center;
  padding-left: 26px;
}

.qat svg {
  display: block;
}

.qat-save { width: 17px; height: 17px; }
.qat-arrow { width: 19px; height: 16px; margin-left: 18px; }
.qat-redo { margin-left: 12px; }
.qat-chev { width: 8px; height: 5px; margin-left: 6px; color: #fff; }
.qat-chev.dim { color: #68a583; }
.qat-touch { width: 14px; height: 20px; margin-left: 15px; }
.qat-chev-touch { margin-left: 10px; }
.qat-more { width: 7px; height: 8px; margin-left: 21px; }

.doc-title {
  position: absolute;
  left: 0;
  right: 0;
  top: 11px;
  text-align: center;
  font-size: 14.2px;
}

/* ribbon tabs */
.tabs {
  height: 41px;
  background: #217346;
  display: flex;
  align-items: flex-end;
  padding-left: 11.5px;
  color: #fff;
  font-size: 14.2px;
}

.tab {
  height: 38px;
  line-height: 38px;
  padding: 0 13.5px;
}

.tab.active {
  background: #f3f3f3;
  color: #217346;
  margin-left: 13.5px;
  padding: 0 13px 0 11px;
}

.bulb {
  width: 16px;
  height: 22px;
  margin: 0 0 8px 19.5px;
}

.tell {
  margin-left: 15px;
  height: 38px;
  line-height: 38px;
}

/* ribbon */
.ribbon {
  height: 115px;
  background: #f3f3f3;
  border-bottom: 1px solid #d2d2d2;
  display: flex;
  padding: 5px 0;
}

.group {
  position: relative;
  display: flex;
  flex-direction: column;
  height: 104px;
  border-right: 1px solid #c6c6c6;
}

.group-label {
  height: 20px;
  line-height: 30px;
  text-align: center;
  font-size: 12.5px;
}

.g-clip .group-label { padding-right: 23px; }
.g-font .group-label { padding-right: 24px; }
.g-align .group-label { padding-right: 20px; }
.g-number .group-label { padding-right: 22px; }

.launcher {
  position: absolute;
  right: 4px;
  bottom: -1px;
  width: 10px;
  height: 10px;
}

.g-clip { width: 205px; }
.g-font { width: 288px; }
.g-align { width: 349px; }
.g-number { width: 194px; }
.g-styles { width: 239px; }

.sep {
  display: block;
  width: 1px;
  height: 28px;
  background: #c6c6c6;
}

.mini-chev {
  width: 8px;
  height: 5px;
  display: block;
  color: #404040;
}

.mini-chev.muted {
  color: #a6a6a6;
}

/* clipboard */
.clip-body {
  flex: none;
  height: 84px;
  display: flex;
  padding-left: 20px;
}

.paste {
  width: 36px;
  display: flex;
  flex-direction: column;
  align-items: center;
  padding-top: 4px;
}

.paste-icon {
  width: 34px;
  height: 38px;
}

.paste-label {
  margin-top: 3px;
  color: #a6a6a6;
}

.paste .mini-chev {
  margin-top: 7px;
}

.clip-list {
  margin: -2px 0 0 9px;
}

.clip-item {
  height: 29px;
  display: flex;
  align-items: center;
  white-space: nowrap;
}

.clip-icon {
  width: 17px;
  height: 19px;
  margin-right: 7px;
}

.copy-chev {
  margin-left: 13px;
}

/* font */
.font-rows {
  flex: 1;
  padding: 8px 0 0 10px;
}

.font-top {
  display: flex;
  height: 28px;
  align-items: center;
}

.select {
  height: 28px;
  line-height: 26px;
  background: #fff;
  border: 1px solid #ababab;
  padding-left: 2px;
  position: relative;
  font-size: 14px;
  color: #333;
}

.caret {
  position: absolute;
  right: 6px;
  top: 11px;
  border: 4px solid transparent;
  border-top: 4px solid #666;
  border-bottom: 0;
}

.select-font { width: 144px; margin-right: 2px; }
.select-size { width: 62px; padding-left: 3px; }
.select-general { width: 174px; }

.grow {
  width: 28px;
  text-align: center;
  font-size: 17px;
  color: #666;
  position: relative;
}

.grow:first-of-type {
  margin-left: 4px;
}

.grow-up, .grow-down {
  position: absolute;
  top: 0;
  right: 4px;
  border: 3px solid transparent;
}

.grow-up { border-bottom: 3px solid #2e75b6; border-top: 0; }
.grow-down { border-top: 3px solid #2e75b6; border-bottom: 0; }

.font-tools {
  display: grid;
  grid-template-columns: 26px 36px 22px 24px 6px 31px 14px 16px 21px 24px 30px 14px;
  height: 28px;
  margin-top: 11px;
  align-items: center;
  justify-items: center;
}

.fmt {
  font-family: "Liberation Sans", sans-serif;
  font-size: 15px;
  color: #505050;
}

.fmt-i {
  font-family: "Liberation Serif", serif;
  font-weight: bold;
  font-size: 16px;
}

.fmt-u {
  font-weight: bold;
}

.tool-icon {
  width: 18px;
  height: 18px;
}

.tool-icon.wide {
  width: 20px;
  height: 22px;
}

.font-color {
  font-family: "Liberation Sans", sans-serif;
  font-size: 17px;
  line-height: 15px;
  color: #555;
  width: 20px;
  text-align: center;
  border-bottom: 5px solid #ff0000;
}

/* alignment */
.align-grid {
  flex: 1;
  display: grid;
  grid-template-columns: 28px 32px 28px 8px 28px 32px 6px 31px 1fr;
  grid-template-rows: 28px 28px;
  row-gap: 11px;
  padding: 8px 0 0 10px;
  align-items: center;
  justify-items: center;
}

.al {
  width: 20px;
  height: 16px;
  display: block;
}

.al-sm {
  width: 16px;
  height: 14px;
}

.al-on {
  width: 28px;
  height: 28px;
  background: #c6c6c6;
  border: 1px solid #8e8e8e;
  display: flex;
  align-items: center;
  justify-content: center;
}

.orient-text {
  font: 9px "Liberation Sans", sans-serif;
  fill: #555;
}

.chev-left {
  justify-self: start;
}

.wrap-icon {
  width: 19px;
  height: 20px;
}

.wrap-text {
  font: 9px "Liberation Sans", sans-serif;
  fill: #555;
}

.align-text {
  justify-self: start;
  display: flex;
  align-items: center;
  white-space: nowrap;
}

.merge-chev {
  margin-left: 18px;
}

.indent {
  width: 18px;
  height: 16px;
}

/* number */
.number-rows {
  flex: 1;
  padding: 8px 0 0 10px;
}

.number-tools {
  display: grid;
  grid-template-columns: 26px 20px 32px 29px 10px 26px 34px;
  height: 28px;
  margin-top: 11px;
  align-items: center;
  justify-items: center;
}

.num-sym {
  font-size: 18px;
  color: #606060;
}

.num-sym.comma {
  font-weight: bold;
  line-height: 14px;
  margin-top: -6px;
}

.dec-icon {
  width: 24px;
  height: 24px;
}

.dec-text {
  font: 9px "Liberation Sans", sans-serif;
  fill: #555;
}

/* styles */
.style-cols {
  flex: none;
  height: 84px;
  display: grid;
  grid-template-columns: 96px 67px 60px;
  padding: 5px 0 0 7px;
}

.style-col {
  display: flex;
  flex-direction: column;
  align-items: center;
  line-height: 20px;
  white-space: nowrap;
}

.style-col > span {
  display: flex;
  align-items: center;
}

.style-icon {
  width: 38px;
  height: 38px;
  margin-bottom: 2px;
}

.style-chev {
  margin-left: 4px;
}

/* formula bar */
.formula {
  height: 54px;
  background: #e6e6e6;
  display: flex;
  align-items: center;
  padding: 0 6px;
  position: relative;
}

.name-box {
  width: 127px;
  height: 30px;
  line-height: 28px;
  background: #fff;
  border: 1px solid #bdbdbd;
  padding-left: 6px;
  font-size: 14px;
  position: relative;
}

.name-box .caret {
  top: 12px;
}

.grip {
  width: 3px;
  height: 15px;
  margin: 0 17px 0 17px;
  background: repeating-linear-gradient(#a9a9a9 0 3px, transparent 3px 6px);
}

.fx-box {
  width: 136px;
  height: 30px;
  background: #fff;
  border: 1px solid #bdbdbd;
  display: flex;
  align-items: center;
  padding-left: 14px;
  gap: 30px;
}

.fx-x {
  width: 16px;
  height: 16px;
}

.fx {
  font: italic 20px "Liberation Serif", serif;
  color: #666;
}

.formula-input {
  flex: 1;
  height: 30px;
  margin-left: 4px;
  background: #fff;
  border: 1px solid #bdbdbd;
  display: flex;
  align-items: center;
  justify-content: flex-end;
}

.formula-chev {
  width: 10px;
  height: 6px;
  margin-right: 4px;
  color: #555;
}

/* worksheet */
.sheet {
  height: 714px;
  display: flex;
  background: #fff;
}

.sheet-main {
  width: 1894px;
  display: flex;
  flex-direction: column;
}

.col-heads {
  height: 18px;
  display: flex;
  background: #e6e6e6;
  border-bottom: 1px solid #a6a6a6;
  font-size: 12.5px;
  color: #333;
}

.corner {
  width: 26px;
  position: relative;
}

.corner i {
  position: absolute;
  right: 3px;
  bottom: 2px;
  border-left: 11px solid transparent;
  border-bottom: 11px solid #b5b5b5;
}

.col-heads span {
  width: 62px;
  line-height: 17px;
  text-align: center;
  border-right: 1px solid #b8b8b8;
}

.col-heads span.on {
  background: #d2d2d2;
  color: #217346;
  border-bottom: 2px solid #217346;
  height: 18px;
}

.sheet-body {
  flex: 1;
  display: flex;
  overflow: hidden;
}

.row-heads {
  width: 26px;
  flex: none;
  background: #e6e6e6;
  border-right: 1px solid #a6a6a6;
}

.row-heads span {
  display: block;
  height: 19px;
  line-height: 18px;
  text-align: center;
  border-bottom: 1px solid #b8b8b8;
  font-size: 12.5px;
  color: #333;
}

.row-heads span.on {
  background: #d2d2d2;
  color: #217346;
  border-right: 2px solid #217346;
}

.canvas {
  position: relative;
  flex: 1;
  background: #fff;
}

.backdrop {
  position: absolute;
  left: 0;
  top: 8px;
  width: 1299px;
  bottom: 0;
  background: #cad2c5;
}

.active-cell {
  position: absolute;
  left: 1798px;
  top: 190px;
  width: 63px;
  height: 20px;
  border: 2px solid #217346;
}

.active-cell i {
  position: absolute;
  right: -4px;
  bottom: -4px;
  width: 6px;
  height: 6px;
  background: #217346;
  border: 1px solid #fff;
}

.heading {
  position: absolute;
  left: 24px;
  top: 20px;
  width: 460px;
  color: #111;
}

.heading h1 {
  margin: 0;
  width: 430px;
  font: bold 28.5px/30px "Liberation Serif", serif;
}

.heading h2 {
  margin: 0;
  font: bold 17.2px/18px "Liberation Serif", serif;
}

/* KPI cards */
.kpi {
  position: absolute;
  top: 15px;
  height: 104px;
  background: #84a98c;
  border-radius: 20px;
}

.kpi-customers { left: 497px; width: 184px; }
.kpi-sales { left: 688px; width: 185px; }
.kpi-profit { left: 880px; width: 184px; }

.kpi-icon {
  position: absolute;
}

.icon-id { left: 15px; top: 31px; width: 37px; height: 49px; }
.icon-sales { left: 10px; top: 35px; width: 41px; height: 49px; }
.icon-profit { left: 6px; top: 35px; width: 50px; height: 51px; }

.kpi-text {
  position: absolute;
  top: 32px;
  font: 26px/26px "Liberation Serif", serif;
  color: #111;
  display: flex;
  flex-direction: column;
  align-items: center;
  white-space: nowrap;
}

.kpi-num {
  font-size: 27.5px;
}

.kpi-text-customers { left: 64px; width: 91px; }
.kpi-text-sales { left: 62px; width: 102px; }
.kpi-text-profit { left: 71px; width: 95px; }

.num-customers { margin-right: 6px; }
.label-sales { margin: 2px 0 -2px 19px; }

/* chart panels */
.panel {
  position: absolute;
  background: #84a98c;
  border-radius: 42px;
}

.panel-top10 { left: 13px; top: 163px; width: 334px; height: 319px; }
.panel-gender { left: 13px; top: 489px; width: 336px; height: 203px; }
.panel-age { left: 356px; top: 164px; width: 406px; height: 220px; }
.panel-profession { left: 356px; top: 388px; width: 401px; height: 304px; }
.panel-segment { left: 770.5px; top: 161px; width: 326.5px; height: 270px; }
.panel-income { left: 766px; top: 439px; width: 334px; height: 255px; }

.chart {
  display: block;
  width: 100%;
  height: 100%;
}

.chart-title {
  font: bold 18.7px "Liberation Serif", serif;
  fill: #111;
  text-anchor: middle;
}

.c-dark { fill: #2f3e46; }
.c-slate { fill: #354f52; }
.c-pale { fill: #cad2c5; }
.c-light { fill: #c5dfb3; }

.axis {
  font: 10.5px "Liberation Sans", sans-serif;
  fill: #1b2622;
}

.axis.end { text-anchor: end; }
.axis.mid { text-anchor: middle; }

.value {
  font: 13px "Liberation Serif", serif;
  fill: #111;
}

.mid-val {
  text-anchor: middle;
  font-size: 13px;
}

.value-axis {
  font: 12.5px "Liberation Serif", serif;
  fill: #111;
}

.legend {
  font: 13px "Liberation Serif", serif;
  fill: #111;
}

.cat-serif {
  font: 13px "Liberation Serif", serif;
  fill: #111;
  text-anchor: end;
}

.cat-sans {
  font: 11.2px "Liberation Sans", sans-serif;
  fill: #1b2622;
  text-anchor: end;
}

/* top 10 table */
.top10-title {
  position: absolute;
  left: 51px;
  top: 26px;
  font: bold 18.4px/22px "Liberation Serif", serif;
  color: #111;
  white-space: nowrap;
}

.loc-table {
  position: absolute;
  left: 13px;
  top: 66px;
  width: 311px;
  border-collapse: collapse;
  table-layout: fixed;
  font-size: 15px;
  letter-spacing: 1.1px;
  color: #18241f;
}

.loc-table td {
  height: 19px;
  padding: 0 4px 0 3px;
  line-height: 16px;
  border: 1px solid #d6dbd3;
  white-space: nowrap;
  overflow: hidden;
}

.loc-table td:first-child {
  width: 112px;
}

.loc-table .num {
  text-align: right;
}

/* slicers */
.slicer {
  position: absolute;
  background: #fff;
  border: 1px solid #70ad47;
  padding: 0 8px;
}

.slicer-profession { left: 1101px; top: 22px; width: 187px; height: 186px; }
.slicer-gender { left: 1106px; top: 213px; width: 186px; height: 96px; }
.slicer-age { left: 1106px; top: 314px; width: 186px; height: 253px; }
.slicer-segment { left: 1106px; top: 572px; width: 186px; height: 116px; }

.slicer-head {
  height: 26px;
  display: flex;
  align-items: center;
  border-bottom: 1px solid #70ad47;
  color: #111;
  font-size: 13px;
  padding-bottom: 2px;
}

.slicer-head b {
  flex: 1;
}

.sl-icon {
  width: 17px;
  height: 15px;
  margin-right: 13px;
}

.sl-icon:last-child {
  margin-right: 2px;
}

.slicer-body {
  display: flex;
  justify-content: space-between;
  margin-top: 3px;
}

.slicer-items {
  flex: 1;
  display: flex;
  flex-direction: column;
  gap: 3px;
}

.slicer-items span {
  height: 24px;
  line-height: 22px;
  background: #c6dfb1;
  border: 1px solid #969696;
  border-radius: 3px;
  padding-left: 9px;
  color: #222;
  font-size: 12.5px;
  letter-spacing: .2px;
}

.track {
  width: 18px;
  margin-left: 4px;
  background: #efefef;
  position: relative;
}

.track i {
  position: absolute;
  left: 7px;
  width: 4px;
  background: #8c8c8c;
}

.slicer-profession .track { height: 149px; }
.slicer-profession .track i { top: 75px; height: 55px; }
.slicer-age .track { height: 214px; }
.slicer-age .track i { top: 18px; height: 155px; }
.slicer-segment .track { height: 79px; }
.slicer-segment .track i { top: 18px; height: 21px; }

/* vertical scrollbar */
.vscroll {
  width: 26px;
  background: #f0f0f0;
  position: relative;
  border-left: 1px solid #c8c8c8;
}

.sb-btn {
  position: absolute;
  left: 3px;
  top: 0;
  width: 19px;
  height: 17px;
  background: #fff;
  border: 1px solid #8c8c8c;
  display: flex;
  align-items: center;
  justify-content: center;
}

.sb-bottom {
  top: auto;
  bottom: 0;
}

.sb-thumb {
  position: absolute;
  left: 3px;
  top: 22px;
  width: 19px;
  height: 310px;
  background: #fff;
  border: 1px solid #8c8c8c;
}

.tri-up { border: 5px solid transparent; border-bottom: 6px solid #222; border-top: 0; }
.tri-down { border: 5px solid transparent; border-top: 6px solid #222; border-bottom: 0; }
.tri-left { border: 5px solid transparent; border-right: 6px solid #222; border-left: 0; }
.tri-right { border: 5px solid transparent; border-left: 6px solid #222; border-right: 0; }

/* sheet tabs */
.sheet-tabs {
  height: 29px;
  background: #e6e6e6;
  border-top: 1px solid #a6a6a6;
  border-bottom: 1px solid #c8c8c8;
  display: flex;
  align-items: flex-start;
  font-size: 16.3px;
  color: #505050;
  position: relative;
}

.tab-nav {
  width: 103px;
  height: 27px;
  position: relative;
}

.nav-left, .nav-right {
  position: absolute;
  top: 10px;
  border: 4px solid transparent;
}

.nav-left { left: 28px; border-right: 5px solid #bdbdbd; border-left: 0; }
.nav-right { left: 57px; border-left: 5px solid #bdbdbd; border-right: 0; }

.sheet-tab {
  height: 25px;
  line-height: 20px;
  margin-top: 2px;
  border-left: 1px solid #9a9a9a;
  text-align: center;
}

.tab-data { width: 62px; }
.tab-demo { width: 133px; }
.tab-trans { width: 130px; }

.tab-dash {
  width: 110px;
  height: 25px;
  margin-top: 0;
  line-height: 21px;
  background: #fff;
  border-left: 0;
  border-bottom: 2px solid #217346;
  color: #217346;
  font-size: 16px;
  font-weight: bold;
}

.add-sheet {
  width: 20px;
  height: 20px;
  margin: 4px 0 0 33px;
}

.tab-grip {
  position: absolute;
  left: 1149px;
  top: 7px;
  margin: 0;
}

.hscroll {
  position: absolute;
  left: 1167px;
  top: 5px;
  width: 727px;
  height: 18px;
  display: flex;
  background: #f0f0f0;
}

.hs-btn {
  width: 18px;
  height: 18px;
  background: #fff;
  border: 1px solid #8c8c8c;
  display: flex;
  align-items: center;
  justify-content: center;
}

.hs-track {
  width: 667px;
  background: #fff;
  border: 1px solid #8c8c8c;
  border-left: 0;
}

.hs-end {
  margin-left: 24px;
}

/* status bar */
.status {
  height: 27px;
  background: #f3f3f3;
  border-bottom: 1px solid #c0c4cc;
  display: flex;
  align-items: center;
  position: relative;
  font-size: 12.4px;
  padding-top: 1px;
}

.ready {
  margin-left: 14px;
  width: 61px;
}

.acc-icon {
  width: 20px;
  height: 20px;
}

.acc-text {
  margin-left: 2px;
  color: #333;
}

.views {
  position: absolute;
  left: 1555px;
  top: 0;
  height: 26px;
  display: flex;
}

.view {
  width: 50px;
  display: flex;
  align-items: center;
  justify-content: center;
}

.view.on {
  background: #c6c6c6;
}

.view svg {
  width: 16px;
  height: 16px;
}

.zoom-ctl {
  position: absolute;
  left: 1712px;
  top: 0;
  height: 26px;
  display: flex;
  align-items: center;
}

.zoom-minus {
  width: 10px;
  height: 1px;
  background: #444;
}

.zoom-track {
  width: 125px;
  height: 1px;
  margin-left: 6px;
  background: #333;
  position: relative;
}

.zoom-tick {
  position: absolute;
  left: 62px;
  top: -3px;
  width: 1px;
  height: 7px;
  background: #333;
}

.zoom-thumb {
  position: absolute;
  left: 45px;
  top: -6px;
  width: 6px;
  height: 13px;
  background: #444;
}

.zoom-plus {
  width: 10px;
  height: 10px;
  margin-left: 6px;
  background: linear-gradient(#444, #444) center / 10px 1px no-repeat, linear-gradient(#444, #444) center / 1px 10px no-repeat;
}

.zoom-pct {
  margin-left: 11px;
  color: #444;
}

/* taskbar */
.taskbar {
  height: 60px;
  position: relative;
  background: linear-gradient(90deg, #e6f0f9 0%, #dfe9f8 22%, #d4dff6 45%, #d5def3 68%, #dfeaf7 85%, #e1ecf8 100%);
  display: flex;
  color: #1a1a1a;
}

.weather {
  position: absolute;
  left: 25px;
  top: 9px;
  display: flex;
}

.weather-icon {
  width: 30px;
  height: 34px;
  margin-top: 1px;
}

.weather-badge {
  position: absolute;
  left: 13px;
  top: -1px;
  width: 20px;
  height: 20px;
  line-height: 20px;
  border-radius: 50%;
  background: #c42b1c;
  color: #fff;
  text-align: center;
  font-weight: bold;
  font-size: 13px;
}

.weather-text {
  margin-left: 8px;
  display: flex;
  flex-direction: column;
  line-height: 21px;
  white-space: nowrap;
  font-size: 14.8px;
}

.sky {
  color: #555;
}

.task-center {
  position: absolute;
  left: 585px;
  top: 0;
  height: 60px;
  width: 760px;
  display: flex;
  align-items: center;
}

.win-start {
  width: 29px;
  height: 29px;
}

.search-pill {
  width: 273px;
  height: 38px;
  margin-left: 19px;
  border-radius: 19px;
  background: #f1f5fd;
  border: 1px solid #c3cde2;
  display: flex;
  align-items: center;
  padding-left: 14px;
  position: relative;
  font-size: 15.5px;
  color: #555;
}

.search-icon {
  width: 17px;
  height: 20px;
  margin-right: 13px;
}

.dolphin {
  position: absolute;
  right: 6px;
  bottom: 0;
  width: 60px;
  height: 38px;
}

.task-app {
  width: 30px;
  height: 30px;
  display: block;
}

.task-app svg {
  display: block;
  width: 30px;
  height: 30px;
}

.app-task { margin-left: 16px; }
.app-chat { margin-left: 25px; }
.app-copilot { margin-left: 25px; }
.app-edge { margin-left: 25px; }
.app-files { margin-left: 25px; }
.app-mail { margin-left: 25px; }
.app-excel { margin-left: 25px; position: relative; }
.app-osk { margin-left: 25px; }

.app-excel::before {
  content: "";
  position: absolute;
  left: -9px;
  top: -9px;
  width: 48px;
  height: 48px;
  background: #eef2fb;
  border-radius: 4px;
}

.app-excel svg {
  position: relative;
}

.excel-x {
  font: bold 13px "Liberation Sans", sans-serif;
  fill: #fff;
}

.task-dot {
  position: absolute;
  top: 51px;
  width: 7px;
  height: 4px;
  border-radius: 2px;
  background: #7d8590;
}

.dot-files { left: 567px; }
.dot-osk { left: 733px; }

.task-bar {
  position: absolute;
  left: 671px;
  top: 51px;
  width: 20px;
  height: 4px;
  border-radius: 2px;
  background: #0f6cbd;
}

.tray {
  position: absolute;
  left: 1563px;
  top: 0;
  height: 60px;
  width: 340px;
  display: flex;
  align-items: center;
  color: #1a1a1a;
}

.tray-chev { width: 14px; height: 8px; }
.tray-cloud { width: 20px; height: 14px; margin-left: 24px; }

.lang {
  width: 38px;
  margin-left: 18px;
  display: flex;
  flex-direction: column;
  align-items: center;
  line-height: 20px;
  font-size: 14.8px;
}

.tray-wifi { width: 20px; height: 16px; margin-left: 19px; }
.tray-vol { width: 20px; height: 16px; margin-left: 9px; }
.tray-bat { width: 20px; height: 18px; margin-left: 11px; }

.clock {
  width: 85px;
  margin-left: 5px;
  display: flex;
  flex-direction: column;
  align-items: flex-end;
  line-height: 20px;
  font-size: 14.5px;
}

.tray-bell {
  width: 16px;
  height: 20px;
  margin-left: 11px;
}

/* on-screen keyboard */
.osk {
  position: absolute;
  left: 1279px;
  top: 4px;
  width: 632px;
  height: 193px;
  border-radius: 8px;
  overflow: hidden;
  background: #1a1a1a;
  box-shadow: 0 6px 26px rgba(0, 0, 0, .38);
}

.osk-title {
  height: 37px;
  background: #f3f3f3;
  display: flex;
  align-items: center;
  padding: 0 0 2px 9px;
  color: #8c8c8c;
  font-size: 14.3px;
}

.osk-logo {
  width: 20px;
  height: 22px;
}

.osk-name {
  margin-left: 6px;
}

.osk-btns {
  margin-left: auto;
  display: flex;
  align-items: center;
  padding-right: 24px;
}

.osk-min {
  width: 12px;
  height: 1px;
  background: #888;
}

.osk-max {
  width: 12px;
  height: 12px;
  margin-left: 46px;
  border: 1px solid #d0d0d0;
  border-radius: 2px;
}

.osk-close {
  width: 13px;
  height: 13px;
  margin-left: 47px;
}

.osk-gap {
  height: 28px;
}

.osk-keys {
  display: flex;
  padding-left: 2px;
}

.osk-main {
  width: 393px;
  display: flex;
  flex-direction: column;
  gap: 2px;
}

.key-row {
  display: flex;
  gap: 2px;
  height: 24px;
}

.key {
  width: 23px;
  flex: none;
  background: #303030;
  color: #e6e6e6;
  font-size: 13px;
  display: flex;
  align-items: center;
  justify-content: center;
  position: relative;
  padding: 0 3px 6px 0;
  overflow: hidden;
}

.key.tiny {
  font-size: 8px;
  align-items: flex-start;
  padding: 3px 0 0 4px;
  justify-content: flex-start;
  color: #d0d0d0;
}

.key.dual s {
  position: absolute;
  left: 3px;
  top: 0;
  text-decoration: none;
  font-size: 10px;
  color: #8a8a8a;
}

.key.dual b {
  position: absolute;
  right: 5px;
  bottom: 1px;
  font-weight: normal;
  font-size: 12px;
}

.k-back { width: 43px; }
.k-tab { width: 36px; justify-content: flex-start; padding-left: 5px; }
.k-enter { width: 55px; padding: 3px 0 6px 14px; justify-content: flex-start; margin-bottom: -2px; height: 26px; }
.k-caps { width: 45px; justify-content: flex-start; padding-left: 5px; }
.k-enter-low { width: 46px; }
.k-del { width: 30px; }
.k-fn { justify-content: flex-start; padding-left: 5px; }
.k-space { width: 138px; }
.k-menu { width: 28px; }

.back-icon { width: 18px; height: 12px; margin-right: 8px; margin-bottom: 2px; }
.arrow-icon { width: 14px; height: 8px; margin-bottom: 2px; }
.arrow-side { width: 8px; height: 14px; margin-top: 2px; }
.win-icon { width: 14px; height: 14px; margin-top: 3px; }
.menu-icon { width: 10px; height: 14px; margin-top: 6px; }

.osk-side {
  margin-left: 9px;
  width: 226px;
  display: grid;
  grid-template-columns: 73px 73px 74px;
  grid-auto-rows: 24px;
  column-gap: 2px;
  row-gap: 2px;
}

.key.side {
  width: auto;
  justify-content: flex-start;
  padding: 0 0 6px 5px;
  font-size: 13.3px;
}

.side-3 {
  margin-left: 2px;
}

.key.lit {
  background: #e6e6e6;
  color: #222;
}

.key.off {
  color: #6a6a6a;
}
```
